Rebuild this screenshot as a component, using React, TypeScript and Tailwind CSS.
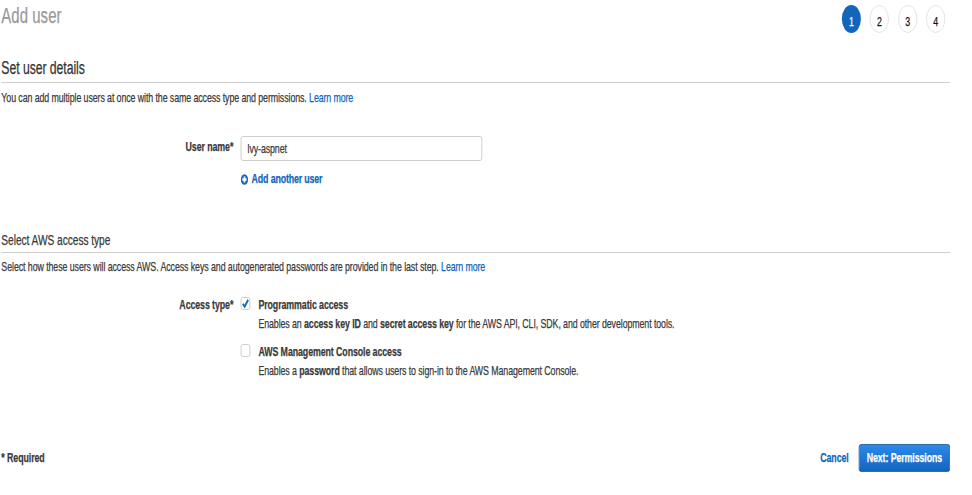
import { ReactNode } from "react";

function LearnMore() {
  return <a className="tracking-[-0.18px] text-[#1166bb]">Learn more</a>;
}

function Step({ n, active }: { n: number; active?: boolean }) {
  return (
    <div
      className={
        active
          ? "flex h-7 w-7 items-center justify-center rounded-full bg-[#1166bb] pt-[5px] text-[13px] text-white"
          : "flex h-7 w-7 items-center justify-center rounded-full border-[1.5px] border-[#dedede] pt-[5px] text-[13px] text-[#111]"
      }
    >
      {n}
    </div>
  );
}

function Option({ title, checked, children }: { title: string; checked?: boolean; children: ReactNode }) {
  return (
    <div className="flex h-[47px]">
      <div className="mt-[1px] flex h-[13px] w-[14px] shrink-0 items-center justify-center rounded-[3px] border border-[#c4c4c4] bg-white">
        {checked && (
          <svg viewBox="0 0 12 11" className="h-[11px] w-[12px]" fill="none" stroke="#1166cc" strokeWidth="2.4">
            <path d="M2 5.8 4.8 8.6 10 1.8" />
          </svg>
        )}
      </div>
      <div className="ml-[12px]">
        <div className="h-[19px] font-bold leading-[17px]">{title}</div>
        <div className="leading-[17px]">{children}</div>
      </div>
    </div>
  );
}

export default function App() {
  return (
    <div className="h-[495px] w-[972px] overflow-hidden bg-white">
      {/* Condensed page: laid out wide and squeezed horizontally */}
      <div className="h-[495px] w-[1430px] origin-top-left scale-x-[0.68] whitespace-nowrap pl-[2px] pr-[33px] font-['Liberation_Sans',Arial,sans-serif] text-[13px] tracking-[-0.14px] text-[#3a3a3a] [-webkit-text-stroke:0.25px]">
        <header className="flex h-[58px] justify-between">
          <h1 className="pt-[3px] text-[22px] leading-[26px] tracking-[0.05px] text-[#999]">Add user</h1>
          <div className="flex gap-[13.3px] pr-[7px] pt-[5px]">
            <Step n={1} active />
            <Step n={2} />
            <Step n={3} />
            <Step n={4} />
          </div>
        </header>

        <h2 className="h-[25px] border-b border-[#cfcfcf] text-[18px] leading-[20px] tracking-[-0.08px] text-[#333]">
          Set user details
        </h2>
        <p className="h-[53px] pt-[6px] leading-[18px]">
          You can add multiple users at once with the same access type and permissions. <LearnMore />
        </p>

        <div className="flex h-[95px]">
          <label className="w-[341px] pt-[2px] text-right font-bold leading-[18px]">User name*</label>
          <div className="ml-[11px]">
            <div className="h-[25px] w-[355px] rounded-[3px] border border-[#c4c4c4] pl-[9px] leading-[24px]">lvy-aspnet</div>
            <a className="mt-[9px] flex h-[18px] items-center font-bold tracking-[-0.22px] text-[#1166bb]">
              <svg viewBox="0 0 12 12" className="mr-[5px] h-[11px] w-[11px]">
                <circle cx="6" cy="6" r="5.8" fill="#1166bb" />
                <path d="M6 2.6v6.8M2.6 6h6.8" stroke="white" strokeWidth="2.8" />
              </svg>
              Add another user
            </a>
          </div>
        </div>

        <h3 className="h-[22px] border-b border-[#cfcfcf] text-[15px] leading-[18px] tracking-[-0.08px]">
          Select AWS access type
        </h3>
        <p className="h-[43px] pt-[5px] leading-[18px] tracking-[-0.12px]">
          Select how these users will access AWS. Access keys and autogenerated passwords are provided in the last step.{" "}
          <LearnMore />
        </p>

        <div className="flex h-[148px]">
          <div className="w-[341px] text-right font-bold leading-[17px]">Access type*</div>
          <div className="ml-[11px]">
            <Option title="Programmatic access" checked>
              Enables an <b>access key ID</b> and <b>secret access key</b> for the AWS API, CLI, SDK, and other
              development tools.
            </Option>
            <Option title="AWS Management Console access">
              Enables a <b>password</b> that allows users to sign-in to the AWS Management Console.
            </Option>
          </div>
        </div>

        <footer className="flex h-[28px] items-center justify-between font-bold">
          <span>* Required</span>
          <div className="flex items-center">
            <a className="mr-[15px] text-[#1166bb]">Cancel</a>
            <button className="h-[28px] w-[134px] rounded-[3px] border border-[#125097] bg-linear-to-b from-[#2b8aea] to-[#1265bc] font-bold text-white">
              Next: Permissions
            </button>
          </div>
        </footer>
      </div>
    </div>
  );
}
